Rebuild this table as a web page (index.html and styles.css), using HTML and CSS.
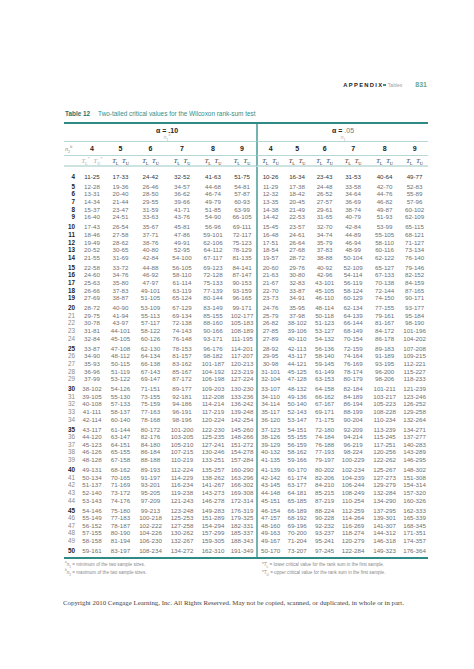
FILE: index.html
```html
<!DOCTYPE html>
<html lang="en">
<head>
<meta charset="utf-8">
<title>Table 12 – Wilcoxon rank-sum test</title>
<link rel="stylesheet" href="styles.css">
</head>
<body>
<div class="page">
  <header class="running-head">
    <span class="appx">APPENDIX</span><span class="sq"></span><span class="sect">Tables</span><span class="folio">831</span>
  </header>
  <h1 class="caption"><b>Table 12</b><span>Two-tailed critical values for the Wilcoxon rank-sum test</span></h1>
  <table class="wx">
    <colgroup>
      <col class="c-lbl">
      <col class="c-a"><col class="c-b"><col class="c-c"><col class="c-d"><col class="c-e"><col class="c-f">
      <col class="c-g"><col class="c-h"><col class="c-i"><col class="c-j"><col class="c-k"><col class="c-l">
    </colgroup>
    <thead>
      <tr class="alpha-row">
        <th></th>
        <th colspan="6"><div class="alpha">α = .10</div><div class="n1"><i>n</i><sub>1</sub><sup>a</sup></div></th>
        <th colspan="6" class="split"><div class="alpha">α = <span class="lt">.05</span></div><div class="n1"><i>n</i><sub>1</sub></div></th>
      </tr>
      <tr class="n-row">
        <th class="lbl"><i>n</i><sub>2</sub><sup>b</sup></th>
        <th>4</th><th>5</th><th>6</th><th>7</th><th>8</th><th>9</th>
        <th class="split">4</th><th>5</th><th>6</th><th>7</th><th>8</th><th>9</th>
      </tr>
      <tr class="t-row">
        <th></th>
        <th class="faint"><span><i>T</i><sub>L</sub><sup>*</sup></span><span><i>T</i><sub>U</sub><sup>*</sup></span></th>
        <th><span><i>T</i><sub>L</sub></span><span><i>T</i><sub>U</sub></span></th>
        <th><span><i>T</i><sub>L</sub></span><span><i>T</i><sub>U</sub></span></th>
        <th><span><i>T</i><sub>L</sub></span><span><i>T</i><sub>U</sub></span></th>
        <th><span><i>T</i><sub>L</sub></span><span><i>T</i><sub>U</sub></span></th>
        <th><span><i>T</i><sub>L</sub></span><span><i>T</i><sub>U</sub></span></th>
        <th class="split"><span><i>T</i><sub>L</sub></span><span><i>T</i><sub>U</sub></span></th>
        <th><span><i>T</i><sub>L</sub></span><span><i>T</i><sub>U</sub></span></th>
        <th><span><i>T</i><sub>L</sub></span><span><i>T</i><sub>U</sub></span></th>
        <th><span><i>T</i><sub>L</sub></span><span><i>T</i><sub>U</sub></span></th>
        <th><span><i>T</i><sub>L</sub></span><span><i>T</i><sub>U</sub></span></th>
        <th><span><i>T</i><sub>L</sub></span><span><i>T</i><sub>U</sub></span></th>
      </tr>
    </thead>
    <tbody id="rows"></tbody>
  </table>
  <div class="notes">
    <div class="note-col left">
      <p><sup>a</sup><i>n</i><sub>1</sub> = minimum of the two sample sizes.</p>
      <p><sup>b</sup><i>n</i><sub>2</sub> = maximum of the two sample sizes.</p>
    </div>
    <div class="note-col right">
      <p>*<i>T</i><sub>L</sub> = lower critical value for the rank sum in the first sample.</p>
      <p>*<i>T</i><sub>U</sub> = upper critical value for the rank sum in the first sample.</p>
    </div>
  </div>
  <p class="copyright">Copyright 2010 Cengage Learning, Inc. All Rights Reserved. May not be copied, scanned, or duplicated, in whole or in part.</p>
</div>
<script src="script.js"></script>
</body>
</html>
```

FILE: styles.css
```css
* { box-sizing: border-box; margin: 0; padding: 0; }

html, body { background: #fff; }

body {
  width: 474px;
  height: 669px;
  overflow: hidden;
  font-family: "Liberation Sans", Arial, sans-serif;
  color: #333;
}

.page { padding-top: 81px; }

sub, sup { font-size: 68%; line-height: 0; }

/* running head */
.running-head {
  display: flex;
  align-items: center;
  justify-content: flex-end;
  height: 8px;
  line-height: 8px;
  padding-right: 47px;
}
.appx {
  font-size: 5.8px;
  font-weight: bold;
  letter-spacing: 1.3px;
  color: #222;
}
.sq {
  width: 2.5px;
  height: 2.5px;
  background: #3d8f8a;
  margin: 0 2px 0 0;
}
.sect { font-size: 5px; color: #a0a0a0; }
.folio {
  margin-left: 13px;
  font-size: 7px;
  font-weight: bold;
  color: #6aa58e;
}

/* caption */
.caption {
  margin-top: 21px;
  padding-left: 65px;
  font-size: 6.4px;
  line-height: 8px;
  font-weight: normal;
  color: #2f8f8a;
  display: flex;
  gap: 8px;
}
.caption b { color: #1d7570; font-weight: bold; }

/* table */
.wx {
  margin: 4px 0 0 64px;
  width: 364px;
  table-layout: fixed;
  border-collapse: separate;
  border-spacing: 0;
  border-top: 2px solid #2f8a86;
  border-bottom: 2px solid #2f8a86;
  font-size: 6.2px;
  color: #707070;
}
.c-lbl { width: 14px; }
.c-a { width: 28px; } .c-b { width: 29px; } .c-c { width: 31px; }
.c-d { width: 32px; } .c-e { width: 30px; } .c-f { width: 28px; }
.c-g { width: 27px; } .c-h { width: 28px; } .c-i { width: 27px; }
.c-j { width: 30px; } .c-k { width: 33px; } .c-l { width: 27px; }

.wx th, .wx td {
  padding: 0;
  text-align: center;
  white-space: nowrap;
  font-weight: normal;
}
.wx .split { border-left: 2px solid #74b3af; }

/* header rows */
.alpha-row th {
  padding: 2.5px 0 1px;
  border-bottom: 1px solid #b6d7d4;
}
.alpha {
  font-size: 7px;
  line-height: 7px;
  font-weight: bold;
  color: #222;
}
.alpha .lt { font-weight: normal; color: #777; }
.n1 {
  font-size: 5px;
  line-height: 6px;
  color: #aaa;
}
.n-row th {
  padding: 3px 0 2px;
  line-height: 8px;
  font-size: 7px;
  font-weight: bold;
  color: #222;
  border-bottom: 1px solid #b6d7d4;
}
.n-row th.lbl {
  text-align: left;
  padding-left: 1px;
  font-size: 5.5px;
  font-weight: normal;
  color: #888;
}
.t-row th {
  padding: 1.5px 0 0.5px;
  line-height: 7px;
  font-family: "Liberation Serif", "Times New Roman", serif;
  font-size: 6.5px;
  color: #333;
  border-bottom: 2px solid #cde3e1;
}
.t-row th span { margin: 0 1.8px; }
.t-row th.faint { color: #aaa; }

/* body rows */
.wx tbody td, .wx tbody th { line-height: 7.6px; }
.wx tbody th {
  text-align: right;
  padding-right: 3px;
  font-size: 6.3px;
  color: #8a8a8a;
}
.wx tbody tr.em th { font-weight: bold; color: #1e1e1e; }
.wx tbody tr.first td, .wx tbody tr.first th { padding-top: 6px; }
.wx tbody tr.first td { color: #333; }
.wx tbody tr.group td, .wx tbody tr.group th { padding-top: 2.5px; }
.wx tbody tr.last td, .wx tbody tr.last th { padding-bottom: 2.6px; }

/* footnotes */
.notes {
  display: flex;
  margin: 2px 0 0 65px;
  font-size: 4.6px;
  line-height: 8px;
  color: #8a8a8a;
}
.note-col.left { width: 197px; }

.copyright {
  margin: 22px 0 0 63px;
  font-family: "Liberation Serif", "Times New Roman", serif;
  font-size: 6.85px;
  line-height: 8px;
  color: #444;
  white-space: nowrap;
}
```

FILE: script.js
```js
(function () {
  var tbody = document.getElementById('rows');
  var N1 = [4, 5, 6, 7, 8, 9];
  var ALPHAS = [0.10, 0.05];

  // exact null distribution of the rank sum of a sample of size n1 among N ranks
  function dist(n1, N) {
    var maxS = 0;
    for (var r = N - n1 + 1; r <= N; r++) maxS += r;
    var f = [];
    for (var k = 0; k <= n1; k++) f.push(new Float64Array(maxS + 1));
    f[0][0] = 1;
    for (var i = 1; i <= N; i++) {
      for (var kk = Math.min(i, n1); kk >= 1; kk--) {
        var prev = f[kk - 1], cur = f[kk];
        for (var s = maxS; s >= i; s--) {
          var v = prev[s - i];
          if (v) cur[s] += v;
        }
      }
    }
    return f[n1];
  }

  function lowerCritical(d, alpha) {
    var total = 0, s;
    for (s = 0; s < d.length; s++) total += d[s];
    var cum = 0, c = 0;
    for (s = 0; s < d.length; s++) {
      cum += d[s];
      if (cum / total <= alpha / 2 + 1e-12) c = s; else break;
    }
    return c;
  }

  for (var n2 = 4; n2 <= 50; n2++) {
    var tr = document.createElement('tr');
    var cls = [];
    if (n2 === 4) cls.push('first');
    else if (n2 % 5 === 0) cls.push('group');
    if (n2 === 50) cls.push('last');
    if (n2 < 20 || n2 % 5 === 0) cls.push('em');
    tr.className = cls.join(' ');

    var th = document.createElement('th');
    th.textContent = n2;
    tr.appendChild(th);

    var dists = N1.map(function (n1) { return dist(n1, n1 + n2); });

    ALPHAS.forEach(function (a, ai) {
      N1.forEach(function (n1, j) {
        var tl = lowerCritical(dists[j], a);
        var tu = n1 * (n1 + n2 + 1) - tl;
        var td = document.createElement('td');
        td.textContent = tl + '-' + tu;
        if (ai === 1 && j === 0) td.className = 'split';
        tr.appendChild(td);
      });
    });
    tbody.appendChild(tr);
  }
})();
```
